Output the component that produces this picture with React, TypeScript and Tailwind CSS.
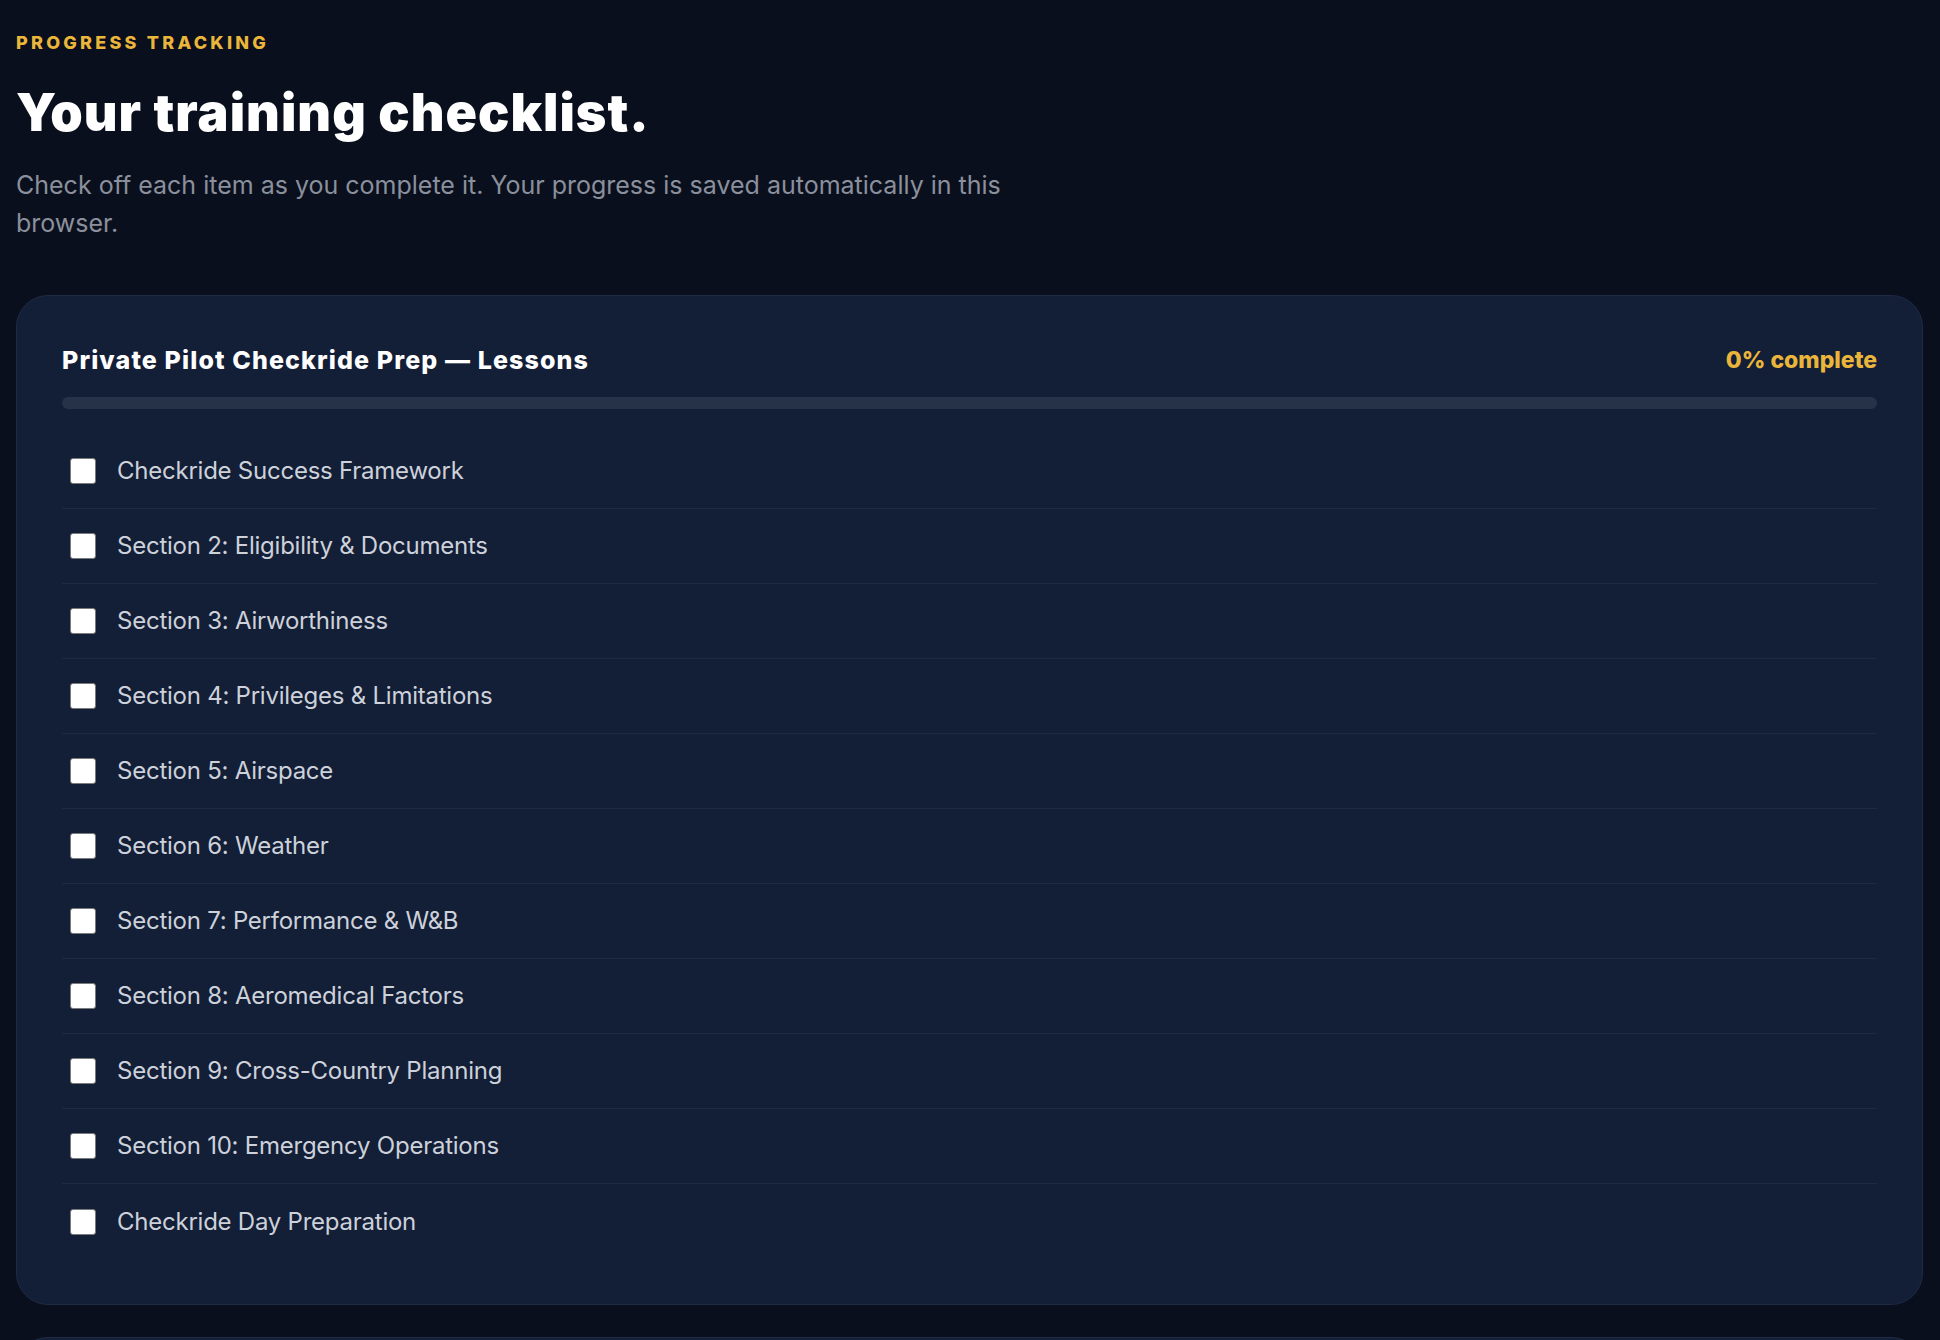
import React, { useState } from 'react';

const lessons = [
  'Checkride Success Framework',
  'Section 2: Eligibility & Documents',
  'Section 3: Airworthiness',
  'Section 4: Privileges & Limitations',
  'Section 5: Airspace',
  'Section 6: Weather',
  'Section 7: Performance & W&B',
  'Section 8: Aeromedical Factors',
  'Section 9: Cross-Country Planning',
  'Section 10: Emergency Operations',
  'Checkride Day Preparation',
];

type ChecklistProps = {
  title?: string;
  items: string[];
};

const Checklist: React.FC<ChecklistProps> = ({ title, items }) => {
  const [done, setDone] = useState<boolean[]>(() => items.map(() => false));
  const pct = items.length ? Math.round((done.filter(Boolean).length / items.length) * 100) : 0;

  const toggle = (i: number) => {
    setDone((prev) => prev.map((v, idx) => (idx === i ? !v : v)));
  };

  return (
    <section className="bg-[#131e37] border border-[#1f2b45] rounded-[32px] px-[45px] pt-[46px] pb-[45px]">
      {title && (
        <>
          <div className="flex items-center justify-between leading-[37px]">
            <h2 className="text-white text-[25px] font-extrabold tracking-[0.045em]">{title}</h2>
            <span className="text-[#eab53b] text-[23px] font-extrabold">{pct}% complete</span>
          </div>
          <div className="mt-[18px] h-[12px] rounded-full bg-[#263248] overflow-hidden">
            <div className="h-full rounded-full bg-[#eab53b]" style={{ width: `${pct}%` }} />
          </div>
        </>
      )}
      <ul className="mt-[25px]">
        {items.map((item, i) => (
          <li
            key={item}
            className="h-[75px] flex items-center gap-[21px] pl-[8px] border-b border-[#1e2a43] last:border-b-0"
          >
            <input
              type="checkbox"
              checked={done[i]}
              onChange={() => toggle(i)}
              className="appearance-none shrink-0 w-[26px] h-[26px] bg-white border-[1.5px] border-[#7a7a7a] rounded-[3px] checked:bg-[#eab53b] cursor-pointer"
            />
            <span className="text-[#cdd1da] text-[24px] leading-[32px] tracking-[-0.01em]">{item}</span>
          </li>
        ))}
      </ul>
    </section>
  );
};

const App: React.FC = () => {
  return (
    <div
      className="min-h-screen bg-[#0a0f1d] px-[16px] pt-[31px] pb-16"
      style={{ fontFamily: 'Inter, "Noto Sans", sans-serif' }}
    >
      <p className="text-[#eab53b] text-[18px] leading-[24px] font-extrabold tracking-[0.18em] uppercase">
        Progress Tracking
      </p>
      <h1 className="mt-[27px] text-white text-[52px] leading-[62px] font-black tracking-[0.02em]">
        Your training checklist.
      </h1>
      <p className="mt-[22px] max-w-[1020px] text-[#8a909c] text-[25px] leading-[38px]">
        Check off each item as you complete it. Your progress is saved automatically in this browser.
      </p>

      <div className="mt-[53px] flex flex-col gap-[32px] pr-[1px]">
        <Checklist title="Private Pilot Checkride Prep — Lessons" items={lessons} />
        <Checklist items={[]} />
      </div>
    </div>
  );
};

export default App;
